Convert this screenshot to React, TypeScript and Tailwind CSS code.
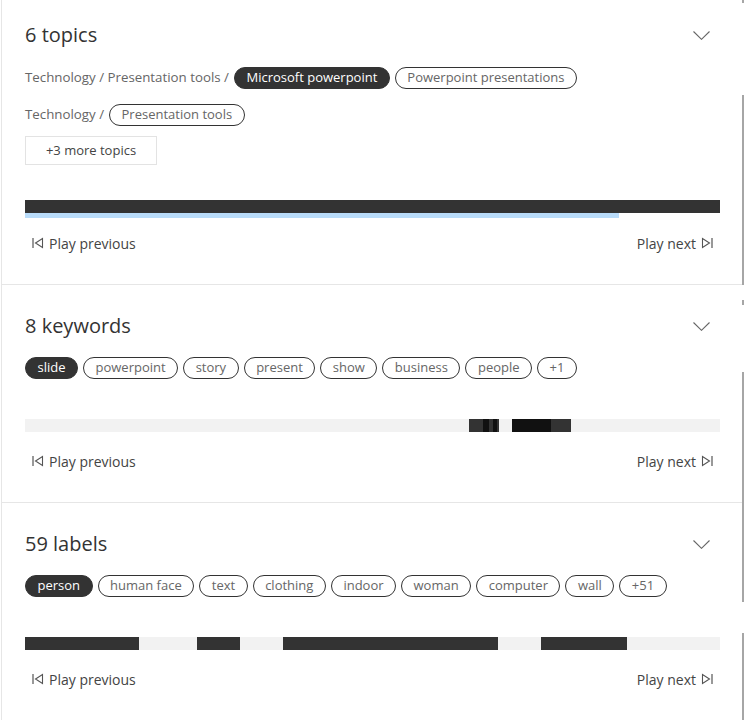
import React from 'react';

type Seg = { w: number; c: string };

const font = { fontFamily: '"Open Sans", "Noto Sans", Arial, sans-serif' };

function Chevron() {
  return (
    <svg width="17" height="9" viewBox="0 0 17 9" className="shrink-0">
      <polyline points="0.5,0.5 8.5,8.3 16.5,0.5" fill="none" stroke="#666" strokeWidth="1.1" />
    </svg>
  );
}

function PrevIcon() {
  return (
    <svg width="12" height="12" viewBox="0 0 12 12" className="shrink-0">
      <line x1="1" y1="1" x2="1" y2="11" stroke="#555" strokeWidth="1.2" />
      <polygon points="10.5,1.5 10.5,10.5 3.5,6" fill="none" stroke="#555" strokeWidth="1.1" />
    </svg>
  );
}

function NextIcon() {
  return (
    <svg width="12" height="12" viewBox="0 0 12 12" className="shrink-0">
      <polygon points="1.5,1.5 1.5,10.5 8.5,6" fill="none" stroke="#555" strokeWidth="1.1" />
      <line x1="11" y1="1" x2="11" y2="11" stroke="#555" strokeWidth="1.2" />
    </svg>
  );
}

function Pill({ label, active }: { label: string; active?: boolean }) {
  return (
    <span
      className={
        active
          ? 'inline-flex h-[22px] items-center rounded-full border border-[#333] bg-[#333] px-[11.5px] text-[13px] text-white'
          : 'inline-flex h-[22px] items-center rounded-full border border-[#333] bg-white px-[11.5px] text-[13px] text-[#666]'
      }
    >
      {label}
    </span>
  );
}

function Header({ title }: { title: string }) {
  return (
    <div className="flex h-[28px] items-center justify-between pr-[10px]">
      <h2 className="text-[20px] leading-[28px] text-[#333]">{title}</h2>
      <Chevron />
    </div>
  );
}

function PlayRow() {
  return (
    <div className="flex h-[20px] items-center justify-between px-[7px] text-[14px] text-[#444]">
      <button className="flex items-center gap-[5px]">
        <PrevIcon />
        <span>Play previous</span>
      </button>
      <button className="flex items-center gap-[5px]">
        <span>Play next</span>
        <NextIcon />
      </button>
    </div>
  );
}

function Timeline({ segs }: { segs: Seg[] }) {
  return (
    <div className="flex h-[13px] w-full bg-[#f2f2f2]">
      {segs.map((s, i) => (
        <div key={i} className="h-full" style={{ width: s.w, background: s.c }} />
      ))}
    </div>
  );
}

const keywords = ['slide', 'powerpoint', 'story', 'present', 'show', 'business', 'people', '+1'];
const labels = ['person', 'human face', 'text', 'clothing', 'indoor', 'woman', 'computer', 'wall', '+51'];

const keywordSegs: Seg[] = [
  { w: 444, c: 'transparent' },
  { w: 14, c: '#333' },
  { w: 6, c: '#111' },
  { w: 4, c: '#333' },
  { w: 4, c: '#111' },
  { w: 2, c: '#333' },
  { w: 13, c: 'transparent' },
  { w: 39, c: '#111' },
  { w: 20, c: '#333' },
];

const labelSegs: Seg[] = [
  { w: 114, c: '#333' },
  { w: 58, c: 'transparent' },
  { w: 43, c: '#333' },
  { w: 43, c: 'transparent' },
  { w: 215, c: '#333' },
  { w: 43, c: 'transparent' },
  { w: 86, c: '#333' },
];

export default function App() {
  return (
    <div className="relative h-[720px] w-[745px] overflow-hidden bg-white" style={font}>
      <div className="ml-px w-[741px] border-l border-[#e6e6e6]">
        {/* topics */}
        <section className="border-b border-[#e6e6e6] pb-[31px] pl-[23px] pr-[22px] pt-[21px]">
          <Header title="6 topics" />
          <div className="mt-[18px] flex items-center gap-[5px] text-[13.3px] text-[#666]">
            <span>Technology / Presentation tools /</span>
            <Pill label="Microsoft powerpoint" active />
            <Pill label="Powerpoint presentations" />
          </div>
          <div className="mt-[15px] flex items-center gap-[5px] text-[13.3px] text-[#666]">
            <span>Technology /</span>
            <Pill label="Presentation tools" />
          </div>
          <button className="mt-[10px] flex h-[29px] w-[132px] items-center justify-center border border-[#e3e3e3] text-[13px] text-[#444]">
            +3 more topics
          </button>
          <div className="mt-[35px]">
            <div className="h-[13px] w-full bg-[#333]" />
            <div className="h-[5px] w-[594px] bg-[#b9dcfa]" />
          </div>
          <div className="mt-[15px]">
            <PlayRow />
          </div>
        </section>

        {/* keywords */}
        <section className="border-b border-[#e6e6e6] pb-[31px] pl-[23px] pr-[22px] pt-[27px]">
          <Header title="8 keywords" />
          <div className="mt-[17px] flex items-center gap-[5px]">
            {keywords.map((k, i) => (
              <Pill key={k} label={k} active={i === 0} />
            ))}
          </div>
          <div className="mt-[40px]">
            <Timeline segs={keywordSegs} />
          </div>
          <div className="mt-[19px]">
            <PlayRow />
          </div>
        </section>

        {/* labels */}
        <section className="pb-[31px] pl-[23px] pr-[22px] pt-[27px]">
          <Header title="59 labels" />
          <div className="mt-[17px] flex items-center gap-[5px]">
            {labels.map((k, i) => (
              <Pill key={k} label={k} active={i === 0} />
            ))}
          </div>
          <div className="mt-[40px]">
            <Timeline segs={labelSegs} />
          </div>
          <div className="mt-[19px]">
            <PlayRow />
          </div>
        </section>
      </div>

      {/* scroll indicators on the right edge */}
      <div className="absolute left-[742px] top-0 h-[3px] w-[2px] bg-[#a6a6a6]" />
      <div className="absolute left-[742px] top-[95px] h-[190px] w-[2px] bg-[#a6a6a6]" />
      <div className="absolute left-[742px] top-[300px] h-[5px] w-[2px] bg-[#a6a6a6]" />
      <div className="absolute left-[742px] top-[372px] h-[230px] w-[2px] bg-[#a6a6a6]" />
      <div className="absolute left-[742px] top-[633px] h-[87px] w-[2px] bg-[#a6a6a6]" />
    </div>
  );
}
